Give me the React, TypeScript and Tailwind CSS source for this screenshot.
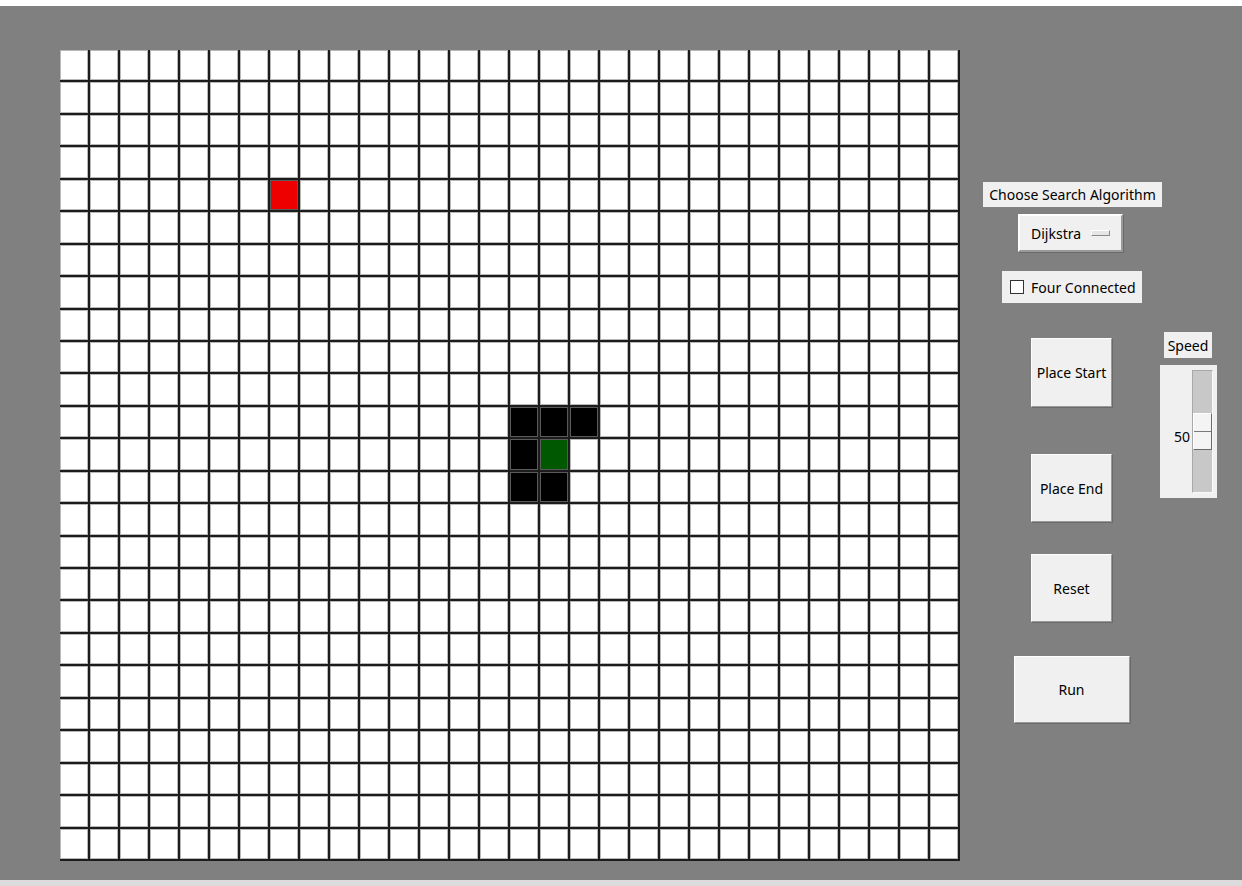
import { useState } from "react";

const COLS = 30;
const ROWS = 25;

// cells that already have a colour: "row-col"
const painted: Record<string, string> = {
  "4-7": "bg-[#ee0000]",
  "11-15": "bg-black",
  "11-16": "bg-black",
  "11-17": "bg-black",
  "12-15": "bg-black",
  "12-16": "bg-[#005800]",
  "13-15": "bg-black",
  "13-16": "bg-black",
};

const raised =
  "bg-[#f0f0f0] border border-t-[#fdfdfd] border-l-[#fdfdfd] border-r-[#9a9a9a] border-b-[#9a9a9a] shadow-[1px_1px_0_#6a6a6a]";

const Cell = ({ fill }: { fill?: string }) => {
  return (
    <div className="border-r-2 border-b-2 border-[#1c1c1c]">
      <div className={`h-full w-full border ${fill ? "border-[#5a5a5a] " + fill : "border-[#b8b8b8] bg-white"}`} />
    </div>
  );
};

const App = () => {
  /* ------- States -------  */
  const [fourConnected, setFourConnected] = useState(false);

  const cells = [];
  for (let r = 0; r < ROWS; r++) {
    for (let c = 0; c < COLS; c++) {
      cells.push(<Cell key={r + "-" + c} fill={painted[r + "-" + c]} />);
    }
  }

  return (
    <div
      className="flex h-[886px] w-[1242px] flex-col overflow-hidden text-[14px] text-black"
      style={{ fontFamily: '"Noto Sans", "Open Sans", sans-serif' }}
    >
      <div className="h-[6px] bg-white" />
      <div className="flex flex-1 bg-[#808080]">
        {/* grid */}
        <div className="pl-[60px] pt-[44px]">
          <div className="grid h-[811px] w-[900px] grid-cols-[repeat(30,30px)] grid-rows-[repeat(25,1fr)]">
            {cells}
          </div>
        </div>

        {/* controls */}
        <div className="flex w-[282px] flex-col items-start pt-[176px]">
          <div className="ml-[23px] flex h-[25px] w-[179px] items-center justify-center bg-[#f0f0f0] leading-none">
            Choose Search Algorithm
          </div>

          <button className={`ml-[58px] mt-[7px] flex h-[38px] w-[105px] items-center justify-between border-2 pl-[11px] pr-[11px] ${raised}`}>
            <span>Dijkstra</span>
            <span className="block h-[6px] w-[19px] border border-t-white border-l-white border-r-[#8a8a8a] border-b-[#8a8a8a] bg-[#e6e6e6]" />
          </button>

          <label className="ml-[42px] mt-[19px] flex h-[32px] w-[140px] cursor-pointer items-center gap-[7px] bg-[#f0f0f0] pl-[8px]">
            <span
              className="block h-[14px] w-[14px] shrink-0 border border-[#333] bg-white"
              onClick={() => setFourConnected(!fourConnected)}
            >
              {fourConnected ? <span className="block text-center text-[10px] leading-[12px]">✓</span> : null}
            </span>
            <span className="whitespace-nowrap">Four Connected</span>
          </label>

          <div className="mt-[29px] flex">
            <div className="ml-[71px] flex w-[81px] flex-col items-center">
              <button className={`mt-[6px] h-[69px] w-[81px] whitespace-nowrap ${raised}`}>Place Start</button>
              <button className={`mt-[47px] h-[68px] w-[81px] ${raised}`}>Place End</button>
              <button className={`mt-[32px] h-[68px] w-[81px] ${raised}`}>Reset</button>
              <button className={`mt-[34px] h-[67px] w-[116px] shrink-0 ${raised}`}>Run</button>
            </div>

            <div className="ml-[48px] flex flex-col items-start">
              <div className="ml-[4px] flex h-[26px] w-[48px] items-center justify-center bg-[#f0f0f0]">Speed</div>
              <div className="mt-[7px] flex h-[133px] w-[57px] bg-[#f0f0f0] pt-[5px]">
                <div className="flex h-[123px] w-[32px] items-center justify-end pr-[2px] pt-[10px]">50</div>
                <div className="relative h-[123px] w-[21px] border border-t-[#a8a8a8] border-l-[#a8a8a8] border-r-[#f8f8f8] border-b-[#f8f8f8] bg-[#c8c8c8]">
                  <div className="absolute left-0 top-[42px] flex h-[37px] w-[19px] flex-col border border-t-white border-l-white border-r-[#6a6a6a] border-b-[#6a6a6a] bg-[#f4f4f4]">
                    <div className="mt-[17px] h-px w-full bg-[#7a7a7a]" />
                  </div>
                </div>
              </div>
            </div>
          </div>
        </div>
      </div>
      <div className="h-[6px] bg-[#dcdcdc]" />
    </div>
  );
};

export default App;
